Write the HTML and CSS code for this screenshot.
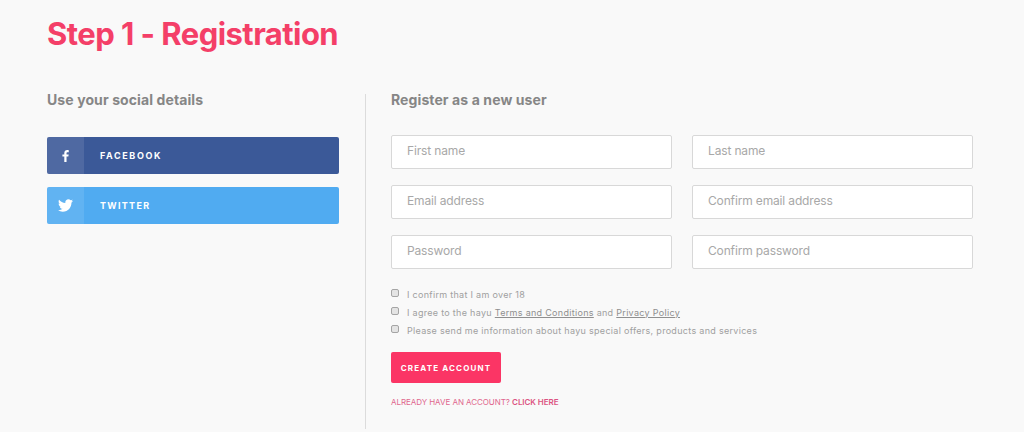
FILE: index.html
```html
<!DOCTYPE html>
<html lang="en">
<head>
    <meta charset="utf-8">
    <title>Step 1 - Registration</title>
    <link rel="stylesheet" href="styles.css">
</head>
<body>
    <h1>Step 1 - Registration</h1>

    <div class="columns">
        <section class="social">
            <h2>Use your social details</h2>
            <a class="social-btn facebook" href="#">
                <span class="social-icon">
                    <svg width="7" height="12" viewBox="0 0 8 14"><path fill="#fff" d="M5.2 14V7.7h2.1l.4-2.5H5.2V3.700c0-.7.3-1.200 1.300-1.200h1.300V.2C7.500.1 6.800 0 6 0 4 0 2.600 1.200 2.600 3.400v1.800H.4v2.500h2.200V14z"/></svg>
                </span>
                <span class="social-label">FACEBOOK</span>
            </a>
            <a class="social-btn twitter" href="#">
                <span class="social-icon">
                    <svg width="15" height="13" viewBox="0 0 24 20"><path fill="#fff" d="M24 2.400c-.9.400-1.800.7-2.800.8 1-.6 1.800-1.600 2.200-2.700-1 .6-2 1-3.100 1.200C19.300.7 18 0 16.600 0c-2.700 0-4.900 2.200-4.900 4.900 0 .4 0 .8.100 1.100C7.700 5.800 4.100 3.900 1.700.9 1.200 1.600 1 2.500 1 3.400c0 1.700.9 3.200 2.200 4.100-.8 0-1.600-.2-2.200-.6v.1c0 2.400 1.700 4.400 3.900 4.800-.4.100-.8.200-1.300.2-.3 0-.6 0-.9-.1.600 2 2.400 3.400 4.600 3.400-1.700 1.300-3.800 2.100-6.100 2.100-.4 0-.8 0-1.200-.1C2.200 19.300 4.800 20 7.500 20c9.100 0 14-7.500 14-14v-.6c1-.7 1.800-1.600 2.500-3z"/></svg>
                </span>
                <span class="social-label">TWITTER</span>
            </a>
        </section>

        <section class="register">
            <h2>Register as a new user</h2>
            <form onsubmit="event.preventDefault();">
                <div class="fields">
                    <input type="text" placeholder="First name">
                    <input type="text" placeholder="Last name">
                    <input type="email" placeholder="Email address">
                    <input type="email" placeholder="Confirm email address">
                    <input type="password" placeholder="Password">
                    <input type="password" placeholder="Confirm password">
                </div>

                <div class="checks">
                    <label><input type="checkbox"><span>I confirm that I am over 18</span></label>
                    <label><input type="checkbox"><span>I agree to the hayu <a href="#">Terms and Conditions</a> and <a href="#">Privacy Policy</a></span></label>
                    <label><input type="checkbox"><span>Please send me information about hayu special offers, products and services</span></label>
                </div>

                <button type="submit">CREATE ACCOUNT</button>
                <p class="login">ALREADY HAVE AN ACCOUNT? <a href="#">CLICK HERE</a></p>
            </form>
        </section>
    </div>
</body>
</html>
```

FILE: styles.css
```css
* {
    margin: 0;
    padding: 0;
    box-sizing: border-box;
}

body {
    height: 432px;
    overflow: hidden;
    padding: 0 51px 0 47px;
    background-color: #f9f9f9;
    font-family: "Inter", "Liberation Sans", sans-serif;
}

h1 {
    height: 94px;
    padding-top: 14px;
    font-size: 31px;
    line-height: 40px;
    font-weight: 700;
    letter-spacing: -0.55px;
    color: #f43f68;
}

h2 {
    font-size: 14px;
    line-height: 12px;
    font-weight: 700;
    letter-spacing: 0.1px;
    color: #868686;
}

.columns {
    display: flex;
}

.social {
    width: 318px;
    padding-right: 26px;
}

.social h2 {
    margin-bottom: 31px;
}

.social-btn {
    display: flex;
    align-items: center;
    width: 292px;
    height: 37px;
    margin-bottom: 13px;
    border-radius: 2px;
    color: #fff;
    text-decoration: none;
}

.social-icon {
    display: flex;
    align-items: center;
    justify-content: center;
    width: 37px;
    height: 100%;
    margin-right: 16px;
    border-radius: 2px 0 0 2px;
    background-color: rgba(255, 255, 255, 0.1);
}

.social-label {
    font-size: 9px;
    font-weight: 700;
    letter-spacing: 1.6px;
}

.facebook {
    background-color: #3b5998;
}

.twitter {
    background-color: #50abf1;
}

.twitter .social-label {
    letter-spacing: 1.3px;
}

.register {
    flex: 1;
    height: 335px;
    padding-left: 25px;
    border-left: 1px solid #dcdcdc;
}

.register h2 {
    margin-bottom: 29px;
}

.fields {
    display: grid;
    grid-template-columns: 281px 281px;
    column-gap: 20px;
    row-gap: 16px;
}

.fields input {
    height: 34px;
    padding: 0 15px 4px;
    border: 1px solid #d8d8d8;
    border-radius: 2px;
    background-color: #fff;
    font-family: inherit;
    font-size: 12px;
    letter-spacing: -0.15px;
}

.fields input::placeholder {
    color: #a8a8a8;
    opacity: 1;
}

.checks {
    margin-top: 16px;
}

.checks label {
    display: flex;
    align-items: center;
    height: 18px;
    font-size: 9px;
    letter-spacing: 0.3px;
    color: #a0a0a0;
}

.checks input {
    appearance: none;
    width: 8px;
    height: 8px;
    margin: 0 8px 2px 0;
    border: 1px solid #a5a5a5;
    border-radius: 2px;
    background-color: #e4e4e4;
}

.checks a {
    color: #8f8f8f;
}

button {
    display: block;
    width: 110px;
    height: 31px;
    margin-top: 13px;
    border: none;
    border-radius: 2px;
    background-color: #fb3565;
    color: #fff;
    font-family: inherit;
    font-size: 8px;
    font-weight: 700;
    letter-spacing: 1.15px;
}

.login {
    margin-top: 14px;
    font-size: 8px;
    line-height: 10px;
    letter-spacing: -0.06px;
    color: #e0668d;
}

.login a {
    color: #dc5482;
    font-weight: 600;
    text-decoration: none;
}
```
